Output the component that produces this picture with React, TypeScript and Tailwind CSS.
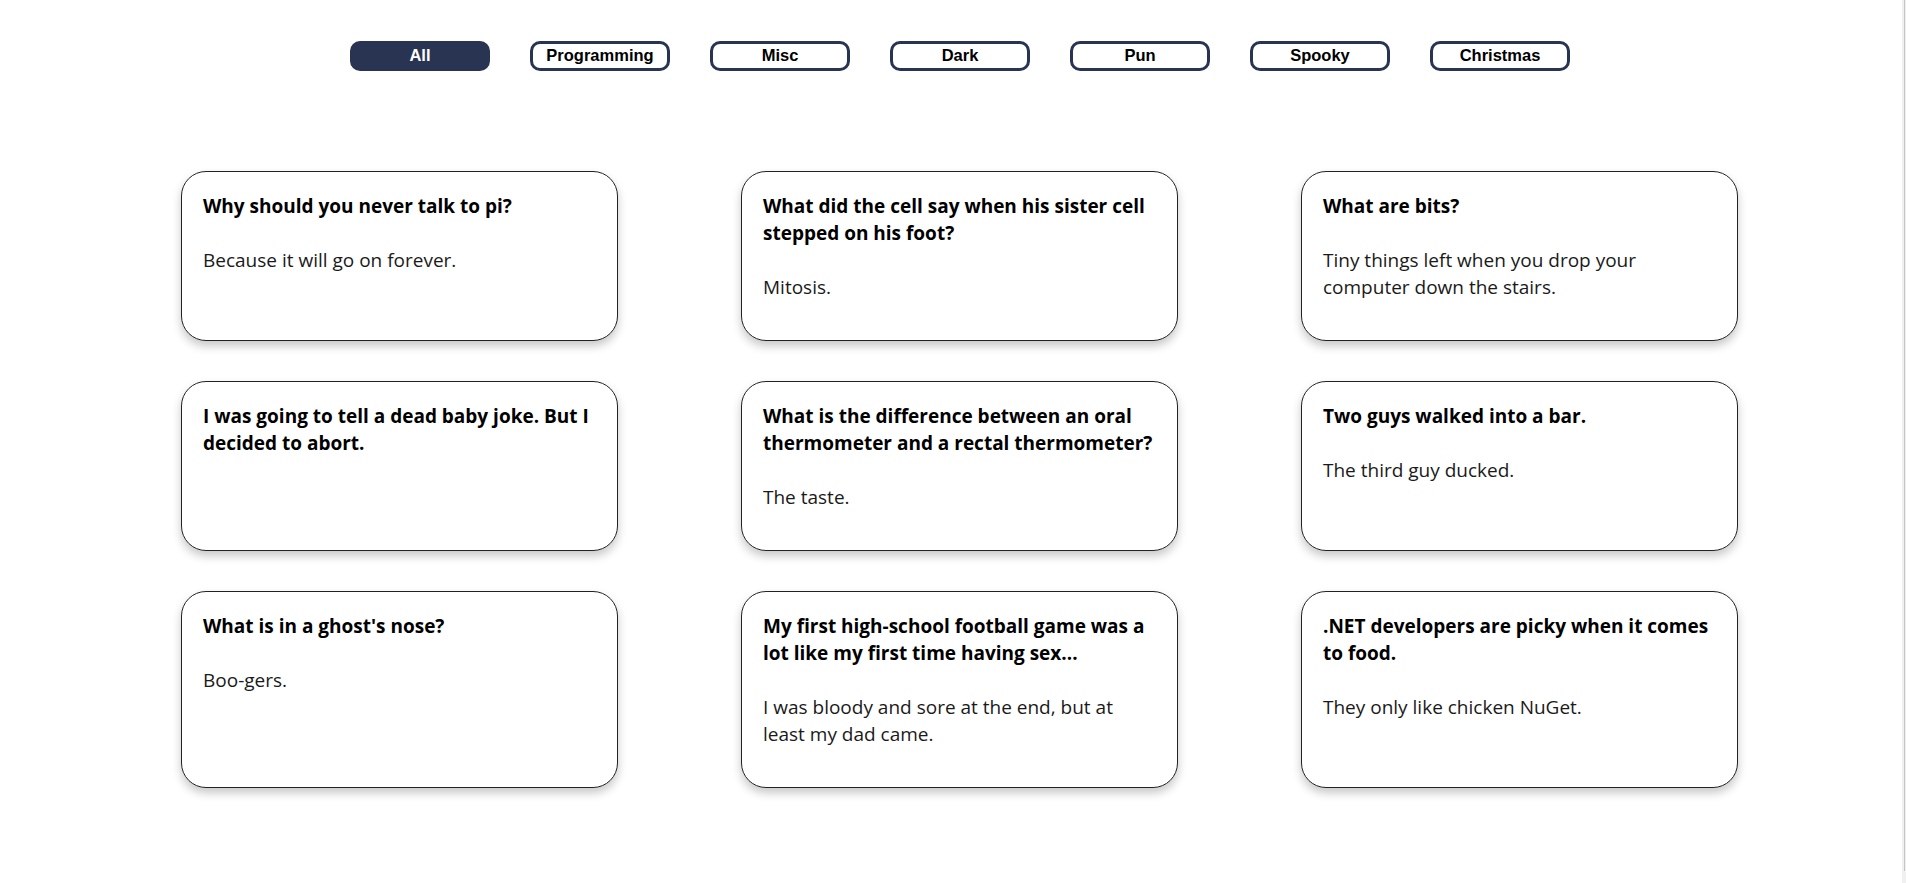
import React from "react";

const categories = ["All", "Programming", "Misc", "Dark", "Pun", "Spooky", "Christmas"];

const jokes: { q: string; a?: string }[] = [
  { q: "Why should you never talk to pi?", a: "Because it will go on forever." },
  { q: "What did the cell say when his sister cell stepped on his foot?", a: "Mitosis." },
  { q: "What are bits?", a: "Tiny things left when you drop your computer down the stairs." },
  { q: "I was going to tell a dead baby joke. But I decided to abort." },
  { q: "What is the difference between an oral thermometer and a rectal thermometer?", a: "The taste." },
  { q: "Two guys walked into a bar.", a: "The third guy ducked." },
  { q: "What is in a ghost's nose?", a: "Boo-gers." },
  {
    q: "My first high-school football game was a lot like my first time having sex...",
    a: "I was bloody and sore at the end, but at least my dad came.",
  },
  { q: ".NET developers are picky when it comes to food.", a: "They only like chicken NuGet." },
];

export default function App() {
  return (
    <div className="flex min-h-[883px] w-full bg-white">
      <div className="flex-1 pt-[41px] pb-[40px]">
        <nav className="flex gap-[40px] pl-[350px]">
          {categories.map((c, i) => (
            <button
              key={c}
              className={
                i === 0
                  ? "h-[30px] w-[140px] rounded-[10px] border-[3px] border-[#283452] bg-[#283452] pb-[2px] text-[16.5px] leading-[20px] font-bold text-white [font-family:'Liberation_Sans',Arial,sans-serif]"
                  : "h-[30px] w-[140px] rounded-[10px] border-[3px] border-[#283452] bg-white pb-[2px] text-[16.5px] leading-[20px] font-bold text-black [font-family:'Liberation_Sans',Arial,sans-serif]"
              }
            >
              {c}
            </button>
          ))}
        </nav>
        <div className="mt-[100px] grid grid-cols-[437px_437px_437px] gap-x-[123px] gap-y-[40px] pl-[181px] [font-family:'Open_Sans',sans-serif]">
          {jokes.map((j, i) => (
            <div
              key={i}
              className="rounded-[25px] border border-[#222] bg-white pl-[21px] pr-[22px] pt-[21px] pb-[39px] shadow-[0_5px_10px_rgba(0,0,0,0.22)]"
            >
              <p className="text-[19px] leading-[27px] font-bold text-black">{j.q}</p>
              {j.a && <p className="mt-[27px] text-[19px] leading-[27px] text-[#1a1a1a]">{j.a}</p>}
            </div>
          ))}
        </div>
      </div>
      <div className="flex w-[4px] shrink-0 bg-[#f0f0f0]">
        <div className="ml-[2px] h-[871px] w-[1px] bg-[#c4c4c4]" />
      </div>
    </div>
  );
}
